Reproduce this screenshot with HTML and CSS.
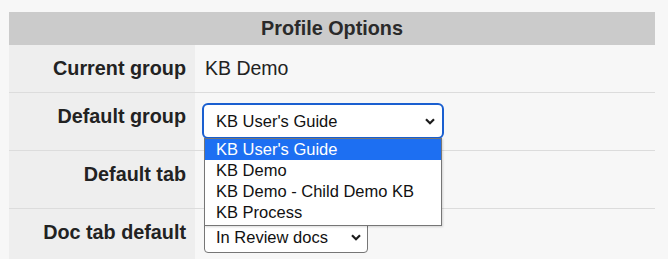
FILE: index.html
```html
<!DOCTYPE html>
<html>
<head>
  <meta charset="UTF-8">
  <title>Profile Options</title>
  <link rel="stylesheet" href="styles.css">
</head>
<body>
  <table class="options-table">
    <tr>
      <th colspan="2" class="options-title">Profile Options</th>
    </tr>
    <tr>
      <td class="opt-label">Current group</td>
      <td class="opt-value">KB Demo</td>
    </tr>
    <tr>
      <td class="opt-label">Default group</td>
      <td class="opt-value">
        <!-- select shown open, so it is drawn by hand -->
        <div class="select-wrap">
          <div class="select select-focused wide">
            <span>KB User's Guide</span>
            <svg class="chevron" width="10" height="7" viewBox="0 0 10 7"><path d="M1 1.2 L5 5.2 L9 1.2" fill="none" stroke="#1c1c1c" stroke-width="2.2"/></svg>
          </div>
          <ul class="select-list">
            <li class="selected">KB User's Guide</li>
            <li>KB Demo</li>
            <li>KB Demo - Child Demo KB</li>
            <li>KB Process</li>
          </ul>
        </div>
      </td>
    </tr>
    <tr>
      <td class="opt-label">Default tab</td>
      <td class="opt-value">
        <!-- hidden under the open list -->
        <div class="select narrow"></div>
      </td>
    </tr>
    <tr>
      <td class="opt-label">Doc tab default</td>
      <td class="opt-value">
        <div class="select narrow">
          <span>In Review docs</span>
          <svg class="chevron" width="10" height="7" viewBox="0 0 10 7"><path d="M1 1.2 L5 5.2 L9 1.2" fill="none" stroke="#1c1c1c" stroke-width="2.2"/></svg>
        </div>
      </td>
    </tr>
  </table>
</body>
</html>
```

FILE: styles.css
```css
body {
  margin: 12px 13px 0 9px;
  background-color: #f7f7f7;
  font-family: "Liberation Sans", Arial, sans-serif;
  color: #222;
}
/* Options table */
.options-table {
  width: 100%;
  border-collapse: collapse;
}
.options-title {
  height: 33px;
  padding: 0;
  background-color: #cbcbcb;
  font-size: 19.8px;
  font-weight: bold;
  text-align: center;
  color: #2a2a2a;
}
.options-table td {
  vertical-align: top;
  padding: 12px 9px 13px;
  line-height: 22px;
  border-bottom: 1px solid #dcdcdc;
}
.opt-label {
  width: 168px;
  background-color: #eeeeee;
  text-align: right;
  font-size: 19.8px;
  font-weight: bold;
}
.opt-value {
  font-size: 19.5px;
  padding-left: 10px !important;
}
/* Selects */
.select-wrap {
  position: relative;
  display: inline-block;
  margin-left: -1px;
}
.opt-value > .select {
  margin-left: -1px;
}
.select {
  display: flex;
  align-items: center;
  justify-content: space-between;
  box-sizing: border-box;
  height: 32px;
  padding: 0 6px 0 11px;
  border: 1px solid #767676;
  border-radius: 4px;
  background-color: #fff;
  font-size: 16.5px;
  line-height: 20px;
  color: #111;
}
.select.wide {
  width: 238px;
}
.select.narrow {
  width: 164px;
}
.select-focused {
  border-color: #fff;
  outline: 2px solid #1a5fd0;
  outline-offset: 0;
}
.chevron {
  display: block;
}
.select-list {
  position: absolute;
  top: calc(100% + 1px);
  left: 0;
  z-index: 2;
  width: 238px;
  box-sizing: border-box;
  margin: 0;
  padding: 0 0 2px;
  list-style: none;
  background-color: #fff;
  border: 1px solid #767676;
  box-shadow: 1px 1px 2px rgba(0, 0, 0, 0.15);
  font-size: 16.5px;
  line-height: 21px;
  color: #111;
}
.select-list li {
  padding-left: 11px;
  white-space: nowrap;
}
.select-list li.selected {
  background-color: #1d6ff2;
  color: #fff;
}
```
